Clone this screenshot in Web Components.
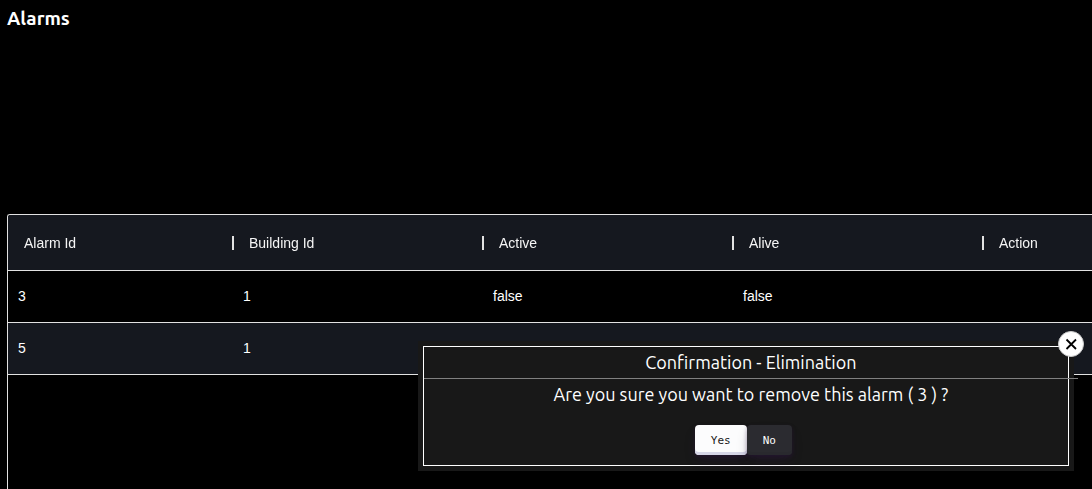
<!DOCTYPE html>
<html lang="en">
<head>
<meta charset="utf-8">
<title>Alarms</title>
<style>
  html, body { height: 100%; }
  body { margin: 0; background: #000; color: #fff; overflow: hidden; font: 18px/24px Ubuntu, "Noto Sans", sans-serif; }
</style>
</head>
<body>
<alarms-page></alarms-page>

<template id="page-template">
  <style>
    :host { display: flex; flex-direction: column; height: 100%; box-sizing: border-box; padding: 6px 0 0 7px; }
    h1 { margin: 0 0 184px; font-size: 19px; line-height: 24px; font-weight: 700; }
    alarm-grid { flex: 1; }
  </style>
  <h1>Alarms</h1>
  <alarm-grid></alarm-grid>
  <confirm-dialog>
    <span slot="title">Confirmation - Elimination</span>
    <span slot="message">Are you sure you want to remove this alarm ( 3 ) ?</span>
    <action-button slot="actions" variant="light">Yes</action-button>
    <action-button slot="actions">No</action-button>
  </confirm-dialog>
</template>

<template id="grid-template">
  <style>
    :host { display: block; box-sizing: border-box; border: 1px solid #e2e2e2; border-width: 1px 0 0 1px; border-radius: 3px 0 0 0; overflow: hidden; font: 14px/20px "Liberation Sans", Arial, sans-serif; }
    table { width: 100%; table-layout: fixed; border-collapse: separate; border-spacing: 0; }
    col { width: 250px; }
    col:first-child { width: 225px; }
    col:last-child { width: auto; }
    th, td { text-align: left; font-weight: 400; box-sizing: border-box; border-bottom: 1px solid #e2e2e2; }
    th { height: 56px; padding: 0 0 0 16px; background: #15181f; color: #f5f5f5; }
    td { height: 52px; padding: 0 10px 2px; }
    tbody tr:nth-child(even) { background: #15181f; }
    .label { display: flex; align-items: center; justify-content: space-between; margin-right: -1px; will-change: transform; }
    th:not(:last-child) .label::after { content: ""; width: 2px; height: 14px; background: #e2e2e2; }
  </style>
  <table>
    <colgroup><col><col><col><col><col></colgroup>
    <thead><tr></tr></thead>
    <tbody></tbody>
  </table>
</template>

<template id="dialog-template">
  <style>
    :host { display: block; position: fixed; right: 18px; bottom: 18px; width: calc(60% + 1px); padding: 5px; box-sizing: border-box; background: #181818; }
    section { border: 1px solid #fff; padding-bottom: 10px; }
    h2, p { margin: 0 -10px 0 0; font-size: 18px; line-height: 31px; font-weight: 400; text-align: center; }
    h2 { border-bottom: 1px solid #808080; }
    .actions { display: flex; justify-content: center; margin: 15px 5px 0 0; }
    .close { position: absolute; top: -10px; right: -10px; width: 26px; height: 26px; padding: 0; border: 1px solid #ccc; border-radius: 50%; background: #fff; display: grid; place-items: center; cursor: pointer; }
    svg { display: block; }
  </style>
  <section role="dialog" aria-labelledby="title">
    <h2 id="title"><slot name="title"></slot></h2>
    <p><slot name="message"></slot></p>
    <div class="actions"><slot name="actions"></slot></div>
  </section>
  <button class="close" type="button" aria-label="Close">
    <svg width="12" height="12" viewBox="0 0 12 12" fill="none" stroke="#000" stroke-width="1.8"><path d="M1.5 1.5l9.5 9.5M11 1.5L1.5 11"/></svg>
  </button>
</template>

<template id="button-template">
  <style>
    :host { display: block; }
    button { display: block; height: 30px; padding: 1px 16px 0; border: 0; border-radius: 4px; background: #2b2b30; color: #fcfcfd; font: 11px/29px "DejaVu Sans Mono", monospace; box-shadow: rgba(45, 20, 66, .4) 0 2px 4px, rgba(45, 20, 66, .3) 0 7px 13px -3px, #29292e 0 -3px 0 inset; cursor: pointer; }
    :host([variant="light"]) button { background: #fcfcfd; color: #181818; box-shadow: rgba(45, 20, 66, .4) 0 2px 4px, rgba(45, 20, 66, .3) 0 7px 13px -3px, #d6d6e7 0 -3px 0 inset; }
  </style>
  <button type="button"><slot></slot></button>
</template>

<script>
  class TemplateElement extends HTMLElement {
    constructor() {
      super();
      const template = document.getElementById(this.constructor.template);
      this.attachShadow({ mode: "open" }).append(template.content.cloneNode(true));
    }
  }

  class ActionButton extends TemplateElement {
    static template = "button-template";
  }

  class ConfirmDialog extends TemplateElement {
    static template = "dialog-template";
    connectedCallback() {
      this.shadowRoot.querySelector(".close").onclick = () => this.remove();
    }
  }

  class AlarmGrid extends TemplateElement {
    static template = "grid-template";
    columns = ["Alarm Id", "Building Id", "Active", "Alive", "Action"];
    rows = [["3", "1", "false", "false", ""], ["5", "1", "", "", ""]];
    connectedCallback() {
      const head = this.shadowRoot.querySelector("thead tr");
      for (const name of this.columns) {
        const th = document.createElement("th");
        const label = document.createElement("div");
        th.scope = "col";
        label.className = "label";
        label.textContent = name;
        th.append(label);
        head.append(th);
      }
      const body = this.shadowRoot.querySelector("tbody");
      for (const row of this.rows) {
        const tr = body.insertRow();
        for (const value of row) tr.insertCell().textContent = value;
      }
    }
  }

  class AlarmsPage extends TemplateElement {
    static template = "page-template";
  }

  customElements.define("action-button", ActionButton);
  customElements.define("confirm-dialog", ConfirmDialog);
  customElements.define("alarm-grid", AlarmGrid);
  customElements.define("alarms-page", AlarmsPage);
</script>
</body>
</html>
